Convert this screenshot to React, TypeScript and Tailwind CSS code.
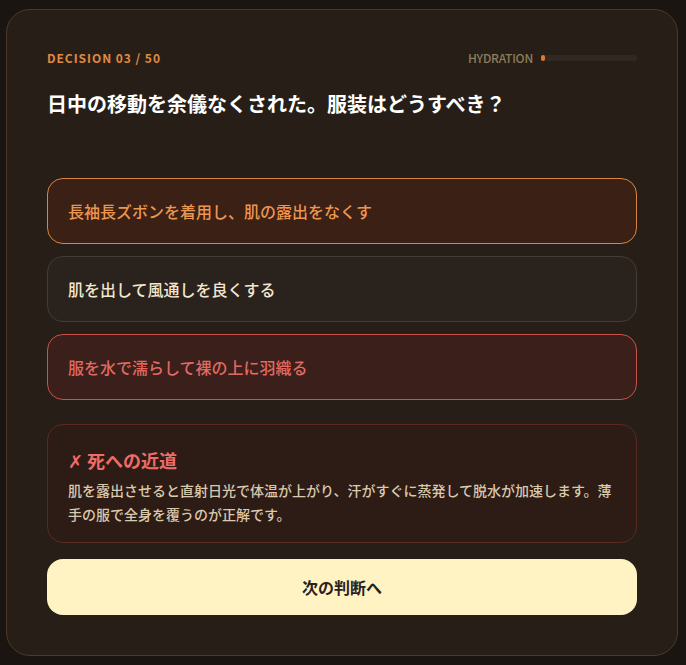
const font = { fontFamily: '"Noto Sans CJK JP", "Noto Sans", sans-serif' };

const options = [
  {
    text: "長袖長ズボンを着用し、肌の露出をなくす",
    cls: "border-[#d9853f] bg-[#3b2016] text-[#ec9650]",
  },
  {
    text: "肌を出して風通しを良くする",
    cls: "border-[#463b33] bg-[#2a221d] text-[#f3e7cf]",
  },
  {
    text: "服を水で濡らして裸の上に羽織る",
    cls: "border-[#c9524a] bg-[#3a1f1a] text-[#e06a62]",
  },
];

const App = () => {
  return (
    <div className="min-h-screen bg-[#1a1510] pt-[9px]" style={font}>
      <div className="ml-[6px] w-[672px] rounded-[24px] border border-[#4a3b26] bg-[#271f17] px-[40px] pt-[39px] pb-[40px]">
        <div className="flex items-center justify-between h-[18px]">
          <div className="text-[12px] font-bold tracking-[0.08em] text-[#e08a42]">
            DECISION 03 / 50
          </div>
          <div className="flex items-center gap-2">
            <span className="text-[12px] font-medium text-[#8c7d5c] tracking-[-0.02em]">HYDRATION</span>
            <div className="h-[6px] w-[96px] rounded-full bg-[#302923]">
              <div className="h-full w-[4px] rounded-full bg-[#e07a32]" />
            </div>
          </div>
        </div>

        <h1 className="mt-[23px] text-[20px] leading-[28px] font-bold text-white">
          日中の移動を余儀なくされた。服装はどうすべき？
        </h1>

        <div className="mt-[60px] flex flex-col gap-[12px]">
          {options.map((o) => (
            <div
              key={o.text}
              className={`rounded-[16px] border px-5 py-[20px] text-[16px] leading-[24px] font-medium ${o.cls}`}
            >
              {o.text}
            </div>
          ))}
        </div>

        <div className="mt-[24px] rounded-[16px] border border-[#5a2a22] bg-[#2d1b15] px-5 pt-[22px] pb-[16px]">
          <div className="h-[26px] text-[18px] leading-[26px] font-bold text-[#ef6b66]">
            <span className="font-normal">✗</span> 死への近道
          </div>
          <p className="mt-[5px] text-[14px] leading-[24px] font-medium text-[#d9c9ad]">
            肌を露出させると直射日光で体温が上がり、汗がすぐに蒸発して脱水が加速します。薄手の服で全身を覆うのが正解です。
          </p>
        </div>

        <button className="mt-[16px] flex h-[56px] w-full items-center justify-center rounded-[16px] bg-[#fff3c4] text-[16px] font-bold text-[#2a2119]">
          次の判断へ
        </button>
      </div>
    </div>
  );
};

export default App;
